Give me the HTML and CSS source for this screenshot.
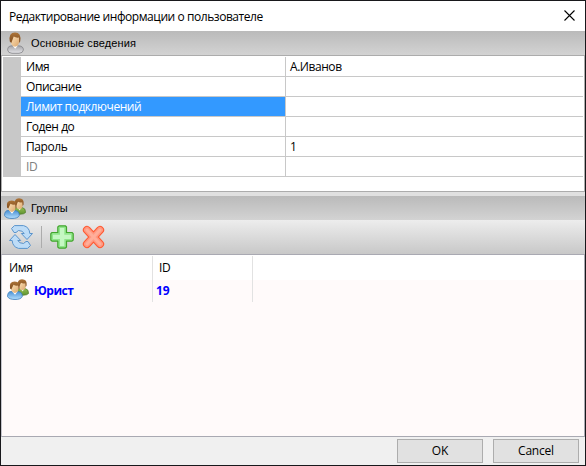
FILE: index.html
```html
<!DOCTYPE html>
<html lang="ru">
<head>
<meta charset="utf-8">
<title>Редактирование информации о пользователе</title>
<link rel="stylesheet" href="styles.css">
</head>
<body>
<svg width="0" height="0" class="defs">
  <defs>
    <linearGradient id="hair" x1="0" y1="0" x2="0" y2="1"><stop offset="0" stop-color="#ad7437"/><stop offset="1" stop-color="#7d4a1e"/></linearGradient>
    <linearGradient id="skin" x1="0" y1="0" x2="1" y2="1"><stop offset="0" stop-color="#ffe6bd"/><stop offset="1" stop-color="#dba66c"/></linearGradient>
    <linearGradient id="gray" x1="0" y1="0" x2="0" y2="1"><stop offset="0" stop-color="#a4a4a8"/><stop offset="1" stop-color="#e4e4e8"/></linearGradient>
    <linearGradient id="blue" x1="0" y1="0" x2="0" y2="1"><stop offset="0" stop-color="#4a90d4"/><stop offset="1" stop-color="#b5e0ff"/></linearGradient>
    <linearGradient id="green" x1="0" y1="0" x2="0" y2="1"><stop offset="0" stop-color="#94bc50"/><stop offset="1" stop-color="#5f9432"/></linearGradient>
    <symbol id="group" viewBox="0 0 22 21">
      <path d="M10 14Q10.500 9.500 13 9.500H18Q21.700 10 21.600 14.500Q20 16.300 16 16.200H11Z" fill="url(#green)" stroke="#4d7a2a" stroke-width=".7"/>
      <path d="M13.500 9.500L15.700 12.500L17.500 9.500Z" fill="#f1f5df"/>
      <ellipse cx="15.300" cy="6.400" rx="3.500" ry="4.500" fill="url(#skin)"/>
      <path d="M10.800 7Q9.800 .3 15 .3Q20.400 .3 19.600 6.500L18.700 8L18.200 4.200Q16 4.800 14 3.800L12.300 7.500Z" fill="url(#hair)"/>
      <path d="M.5 17.500Q.7 12.500 4 12.500H11Q15.300 12.700 15.300 17.500Q14 20.500 8 20.500T.5 17.500Z" fill="url(#blue)" stroke="#3c7dbb" stroke-width=".8"/>
      <path d="M5 12.300L8 15.800L10.800 12.300Z" fill="#fff"/>
      <ellipse cx="7.800" cy="8.900" rx="3.900" ry="5" fill="url(#skin)"/>
      <path d="M3 9.500Q1.700 2.500 7.700 2.500Q13.700 2.500 12.500 9.500L11.600 10.500L11.200 6.500Q8.500 7 6.500 5.700L4.300 10.500Z" fill="url(#hair)"/>
    </symbol>
  </defs>
</svg>
<div class="dialog">
  <header class="title">
    <span class="title-text">Редактирование информации о пользователе</span>
    <svg class="close" width="11" height="11" viewBox="0 0 11 11"><path d="M.5 .5L10.500 10.500M10.500 .5L.5 10.500" stroke="#000" stroke-width="1.100"/></svg>
  </header>
  <div class="section">
    <svg class="person" width="17" height="22" viewBox="0 0 17 22">
      <path d="M.6 18Q.6 13.800 5 13.800H11.500Q16.400 14 16.400 18Q16 21 12 21.300H5Q1 21 .6 18Z" fill="url(#gray)" stroke="#858589" stroke-width=".8"/>
      <path d="M5.500 13.500L8.200 16.800L11 13.500Z" fill="#fff"/>
      <ellipse cx="8" cy="8.700" rx="4.300" ry="6" fill="url(#skin)"/>
      <path d="M2.800 9.500Q1.300 .5 8 .5Q14.700 .5 13.200 9.500L12.200 11L12 5.500Q9 6 6.700 4.500L4.300 11Z" fill="url(#hair)"/>
    </svg>
    <span class="section-text main-text">Основные сведения</span>
  </div>
  <div class="props">
    <div class="gutter"></div>
    <div class="table">
      <div class="row"><div class="key">Имя</div><div class="val">А.Иванов</div></div>
      <div class="row"><div class="key">Описание</div><div class="val"></div></div>
      <div class="row selected"><div class="key">Лимит подключений</div><div class="val"></div></div>
      <div class="row"><div class="key">Годен до</div><div class="val"></div></div>
      <div class="row"><div class="key">Пароль</div><div class="val">1</div></div>
      <div class="row disabled"><div class="key">ID</div><div class="val"></div></div>
    </div>
  </div>
  <div class="splitter"></div>
  <div class="section groups">
    <svg class="people" width="22" height="21"><use href="#group"/></svg>
    <span class="section-text">Группы</span>
  </div>
  <div class="toolbar">
    <svg class="refresh" width="24" height="24" viewBox="0 0 24 24" fill="#bddcf7" stroke="#5a94cc" stroke-width="1" stroke-linejoin="round">
      <path d="M2.500 3.500L5.500 .6H14.500Q20.500 2.200 20.800 8.500H23.500L18 14.500L12.300 8.500H15.300Q13.500 5.500 9.500 5.500L7 7.500H5Z"/>
      <path d="M21.500 20.500L18.500 23.400H9.500Q3.500 21.800 3.200 15.500H.5L6 9.500L11.700 15.500H8.700Q10.500 18.500 14.500 18.500L17 16.500H19Z"/>
    </svg>
    <span class="divider"></span>
    <svg class="add" width="24" height="24" viewBox="0 0 24 24" stroke-linejoin="round"><path d="M9 .8H15.500L16.500 2V7.500H22L23.200 8.700V15L22 16.200H16.500V22L15.300 23.200H9L7.800 22V16.200H2L.8 15V8.700L2 7.500H7.800V2Z" fill="#8fe58a" stroke="#43a52e" stroke-width="1.200"/><path d="M10 3H14.300V9.700H21V14H14.300V21H10V14H3V9.700H10Z" fill="#c5f8c3"/></svg>
    <svg class="remove" width="23" height="24" viewBox="0 0 23 24"><path d="M5 5L18 19M18 5L5 19" stroke="#ff5a32" stroke-width="8.200" stroke-linecap="round"/><path d="M5 5L18 19M18 5L5 19" stroke="#ff9880" stroke-width="6" stroke-linecap="round"/><path d="M5 5L18 19M18 5L5 19" stroke="#ffae9a" stroke-width="3" stroke-linecap="round"/></svg>
  </div>
  <div class="list">
    <div class="list-row head"><div class="name">Имя</div><div class="id">ID</div></div>
    <div class="list-row item"><div class="name"><svg width="22" height="21"><use href="#group"/></svg><span>Юрист</span></div><div class="id">19</div></div>
  </div>
  <footer class="footer"><button class="btn">OK</button><button class="btn cancel">Cancel</button></footer>
</div>
</body>
</html>
```

FILE: styles.css
```css
* { box-sizing: border-box; }
body { margin: 0; font: 12px/18px "Open Sans", "Noto Sans", sans-serif; color: #000; }
svg { display: block; flex: none; }
.defs { position: absolute; }
.dialog { width: 586px; height: 466px; border: 1px solid #18181b; background: #f0f0f0; display: flex; flex-direction: column; overflow: hidden; white-space: nowrap; }
.title { height: 30px; flex: none; background: #fff; display: flex; align-items: center; justify-content: space-between; padding: 0 10px 0 8px; }
.title-text { letter-spacing: -0.44px; margin-top: 1px; }
.close { margin-top: -2px; }
.section { height: 24px; flex: none; display: flex; align-items: center; padding-left: 6px; background: linear-gradient(#bababa, #d3d3d3); font: 11px/16px "Liberation Sans", sans-serif; }
.section-text { margin-left: 7px; margin-top: -1px; }
.main-text { letter-spacing: 0.12px; }
.groups { padding-left: 3px; }
.groups .section-text { margin-left: 5px; margin-top: 0; }
.props { height: 137px; flex: none; background: #fff; border: 1px solid #acacac; padding: 1px 1px 0; display: flex; }
.gutter { width: 18px; height: 120px; background: #c8c8c8; }
.table { flex: 1; height: 120px; letter-spacing: -0.44px; }
.row { height: 20px; display: grid; grid-template-columns: 264px 1fr; border-bottom: 1px solid #c8c8c8; }
.key { padding: 1px 0 0 5px; }
.val { padding: 1px 0 0 4px; border-left: 1px solid #c8c8c8; }
.selected .key { background: #3399ff; color: #fff; }
.disabled .key { color: #808080; }
.splitter { height: 4px; flex: none; background: #e0e0e0; }
.toolbar { height: 34px; flex: none; display: flex; align-items: center; padding-left: 8px; background: linear-gradient(#ededed, #c8c8c8); }
.divider { width: 1px; height: 22px; background: #acacac; margin: 0 8px; }
.remove { margin-left: 8px; }
.list { height: 183px; flex: none; background: #fffafa; border: 1px solid #a9a9b2; border-left-color: #c5c5cc; }
.list-row { display: grid; grid-template-columns: 151px 100px; }
.list-row > div { border-right: 1px solid #e2e2e2; }
.head { height: 25px; background: #fff; padding-top: 1px; line-height: 24px; letter-spacing: -0.3px; }
.head .name { padding-left: 7px; }
.head .id { padding-left: 6px; }
.item { height: 22px; font-weight: 700; color: #0000ff; line-height: 21px; letter-spacing: -0.5px; }
.item .name { display: flex; padding-left: 5px; }
.item .name svg { margin-top: -1px; }
.item .name span { margin-left: 5px; }
.item .id { padding-left: 3px; letter-spacing: 0; }
.footer { flex: 1; display: flex; justify-content: flex-end; gap: 10px; padding: 2px 6px 0 0; }
.btn { width: 86px; height: 24px; border: 1px solid #adadad; background: #e1e1e1; padding: 0; font: 12px/20px "Open Sans", sans-serif; color: #000; }
.cancel { letter-spacing: -0.2px; }
```
